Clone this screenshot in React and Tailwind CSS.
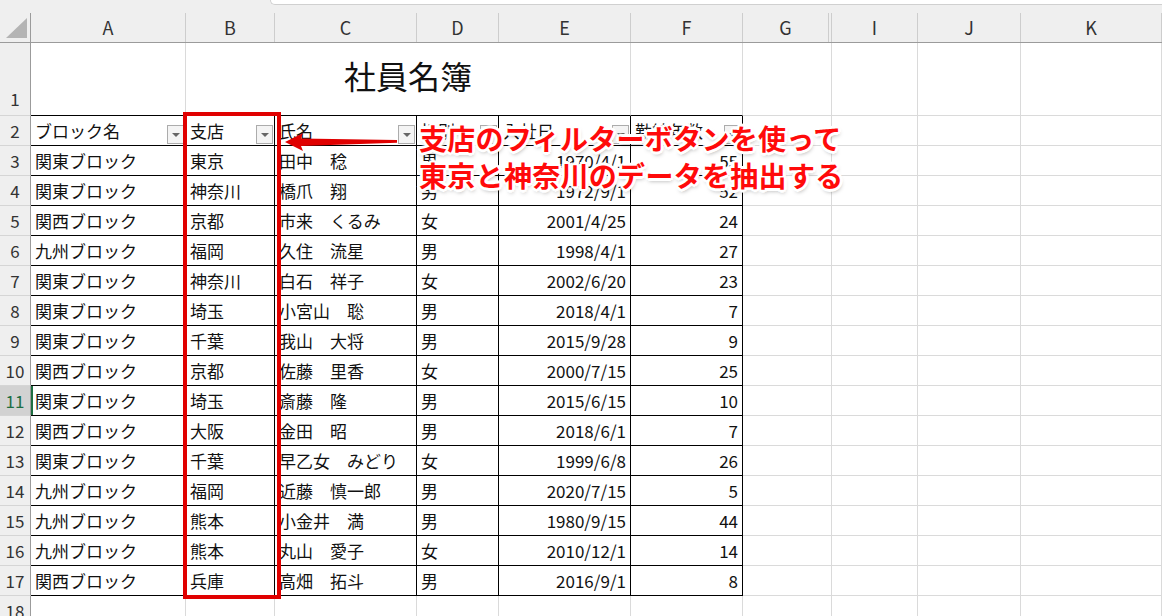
import React from 'react';

// column widths: row header, A-G, hidden H, I, J, K
const gridCols = 'grid grid-cols-[31px_155px_89px_142px_82px_132px_112px_86px_3px_86px_103px_141px]';

const headers = ['ブロック名', '支店', '氏名', '性別', '入社日', '勤続年数'];

const rows = [
  ['関東ブロック', '東京', '田中　稔', '男', '1970/4/1', '55'],
  ['関東ブロック', '神奈川', '橋爪　翔', '男', '1972/9/1', '52'],
  ['関西ブロック', '京都', '市来　くるみ', '女', '2001/4/25', '24'],
  ['九州ブロック', '福岡', '久住　流星', '男', '1998/4/1', '27'],
  ['関東ブロック', '神奈川', '白石　祥子', '女', '2002/6/20', '23'],
  ['関東ブロック', '埼玉', '小宮山　聡', '男', '2018/4/1', '7'],
  ['関東ブロック', '千葉', '我山　大将', '男', '2015/9/28', '9'],
  ['関西ブロック', '京都', '佐藤　里香', '女', '2000/7/15', '25'],
  ['関東ブロック', '埼玉', '斎藤　隆', '男', '2015/6/15', '10'],
  ['関西ブロック', '大阪', '金田　昭', '男', '2018/6/1', '7'],
  ['関東ブロック', '千葉', '早乙女　みどり', '女', '1999/6/8', '26'],
  ['九州ブロック', '福岡', '近藤　慎一郎', '男', '2020/7/15', '5'],
  ['九州ブロック', '熊本', '小金井　満', '男', '1980/9/15', '44'],
  ['九州ブロック', '熊本', '丸山　愛子', '女', '2010/12/1', '14'],
  ['関西ブロック', '兵庫', '高畑　拓斗', '男', '2016/9/1', '8'],
];

const gray = 'border-r border-b border-[#dadada]';
const black = 'border-r border-b border-black';

function RowHead({ n, selected, className = '' }) {
  return (
    <div
      className={`flex justify-center border-r border-b border-r-[#9b9b9b] border-b-[#d5d5d5] text-[17px] ${
        selected ? 'bg-[#d2d2d2] text-[#1e6e42]' : 'bg-[#efefef] text-[#333]'
      } ${className || 'items-center'}`}
    >
      {n}
    </div>
  );
}

// G..K columns to the right of the table
function Blank({ gLine }) {
  return (
    <>
      <div className={gLine ? gray : 'border-b border-[#dadada]'} />
      <div className={gray} />
      <div className={gray} />
      <div className={gray} />
      <div className={gray} />
    </>
  );
}

function FilterButton() {
  return (
    <div className="ml-auto mr-[1px] mb-[1px] self-end w-[17px] h-[19px] shrink-0 border border-[#acacac] bg-[#f4f4f4] flex items-center justify-center">
      <div className="w-0 h-0 border-l-[4px] border-r-[4px] border-t-[4px] border-l-transparent border-r-transparent border-t-[#666]" />
    </div>
  );
}

export default function App() {
  return (
    <div className="relative w-[1162px] h-[616px] overflow-hidden bg-white text-[#111] font-['Noto_Sans_CJK_JP','Noto_Sans',sans-serif]">
      {/* strip above the sheet */}
      <div className="h-[13px] bg-[#efefef]">
        <div className="ml-[270px] h-[5px] bg-white border-l border-b border-[#d0d0d0] rounded-bl-[6px]" />
      </div>

      {/* column letters */}
      <div className={`${gridCols} h-[30px] bg-[#efefef] border-b border-[#9b9b9b] text-[18px] text-[#333]`}>
        <div className="relative border-r border-[#9b9b9b]">
          <svg className="absolute left-[6px] top-[5px]" width="22" height="21" viewBox="0 0 22 21">
            <polygon points="0,20 21,0 21,20" fill="#b4b4b4" />
          </svg>
        </div>
        {['A', 'B', 'C', 'D', 'E', 'F', 'G', '', 'I', 'J', 'K'].map((c, i) => (
          <div key={i} className="flex items-center justify-center border-r border-[#cdcdcd]">
            {c}
          </div>
        ))}
      </div>

      {/* row 1 : title */}
      <div className={`${gridCols} h-[73px]`}>
        <RowHead n="1" className="items-end pb-[4px]" />
        <div className="border-r border-r-[#dadada] border-b border-b-black" />
        <div className="col-span-4 flex justify-center items-start pt-[16px] border-r border-r-[#dadada] border-b border-b-black text-[32px] leading-none">
          社員名簿
        </div>
        <div className="border-r border-r-[#dadada] border-b border-b-black" />
        <Blank />
      </div>

      {/* row 2 : headers */}
      <div className={`${gridCols} h-[30px] text-[17px]`}>
        <RowHead n="2" />
        {headers.map((h) => (
          <div key={h} className={`flex items-center pl-[4px] overflow-hidden ${black}`}>
            <span className="whitespace-nowrap">{h}</span>
            <FilterButton />
          </div>
        ))}
        <Blank />
      </div>

      {/* data rows */}
      {rows.map((r, i) => (
        <div key={i} className={`${gridCols} h-[30px] text-[17px]`}>
          <RowHead n={i + 3} selected={i + 3 === 11} />
          {r.map((v, j) => (
            <div
              key={j}
              className={`flex items-center whitespace-nowrap ${black} ${
                j >= 4 ? 'justify-end pr-[4px]' : 'pl-[4px]'
              } ${j === 0 && i + 3 === 11 ? 'shadow-[inset_2px_0_0_#1e6e42]' : ''}`}
            >
              {v}
            </div>
          ))}
          <Blank />
        </div>
      ))}

      {/* row 18 */}
      <div className={`${gridCols} h-[30px]`}>
        <RowHead n="18" className="items-start pt-[2px]" />
        <div className={gray} />
        <div className={gray} />
        <div className={gray} />
        <div className={gray} />
        <div className={gray} />
        <div className={gray} />
        <Blank />
      </div>

      {/* annotation: red frame round column B */}
      <div className="absolute left-[183px] top-[112px] w-[98px] h-[487px] border-[4px] border-[#e00000]" />

      {/* annotation: arrow */}
      <svg className="absolute left-[280px] top-[128px]" width="125" height="28" viewBox="280 128 125 28">
        <polygon
          points="285,142 303,133 301,138.5 397,140 397,142.8 301,146 303,151"
          fill="#e00000"
        />
      </svg>

      {/* annotation: callout text */}
      <div className="absolute left-[419px] top-[120px] text-[28px] leading-[37px] font-bold tracking-[0.3px] text-[#ff0a0a] whitespace-nowrap [text-shadow:3px_0_0_#fff,-3px_0_0_#fff,0_3px_0_#fff,0_-3px_0_#fff,2px_2px_0_#fff,-2px_-2px_0_#fff,2px_-2px_0_#fff,-2px_2px_0_#fff,1px_3px_4px_rgba(0,0,0,0.35)]">
        <div>支店のフィルターボタンを使って</div>
        <div>東京と神奈川のデータを抽出する</div>
      </div>
    </div>
  );
}
